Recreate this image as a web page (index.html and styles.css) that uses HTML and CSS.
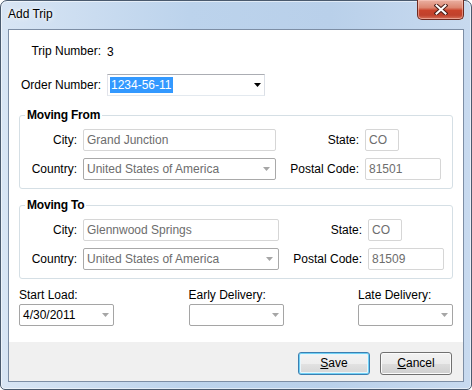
FILE: index.html
```html
<!DOCTYPE html>
<html lang="en">
<head>
    <meta charset="UTF-8">
    <title>Add Trip</title>
    <link rel="stylesheet" href="styles.css">
</head>
<body>
    <div class="window">
        <div class="titlebar">
            <span class="title">Add Trip</span>
            <button class="close" type="button">
                <svg width="14" height="11" viewBox="0 0 14 11">
                    <path d="M2.5 1.5 L11.5 9.5 M11.5 1.5 L2.5 9.5" stroke="#4a1e18" stroke-width="4" stroke-linecap="square"/>
                    <path d="M2.5 1.5 L11.5 9.5 M11.5 1.5 L2.5 9.5" stroke="#fff" stroke-width="2" stroke-linecap="square"/>
                </svg>
            </button>
        </div>
        <div class="client">
            <div class="content">
                <div class="head">
                    <span class="lbl">Trip Number:</span>
                    <span>3</span>
                    <span class="lbl">Order Number:</span>
                    <div class="combo order">
                        <span class="sel">1234-56-11</span>
                        <svg class="arrow" width="7" height="4"><polygon points="0,0 7,0 3.5,4" fill="#000"/></svg>
                    </div>
                </div>

                <fieldset class="group from">
                    <legend>Moving From</legend>
                    <div class="addr">
                        <span class="lbl">City:</span>
                        <div class="box">Grand Junction</div>
                        <span class="lbl">State:</span>
                        <div class="box state">CO</div>
                        <span class="lbl">Country:</span>
                        <div class="combo off">
                            <span>United States of America</span>
                            <svg class="arrow" width="7" height="4"><polygon points="0,0 7,0 3.5,4" fill="#a6a6a6"/></svg>
                        </div>
                        <span class="lbl">Postal Code:</span>
                        <div class="box postal">81501</div>
                    </div>
                </fieldset>

                <fieldset class="group to">
                    <legend>Moving To</legend>
                    <div class="addr">
                        <span class="lbl">City:</span>
                        <div class="box">Glennwood Springs</div>
                        <span class="lbl">State:</span>
                        <div class="box state">CO</div>
                        <span class="lbl">Country:</span>
                        <div class="combo off">
                            <span>United States of America</span>
                            <svg class="arrow" width="7" height="4"><polygon points="0,0 7,0 3.5,4" fill="#a6a6a6"/></svg>
                        </div>
                        <span class="lbl">Postal Code:</span>
                        <div class="box postal">81509</div>
                    </div>
                </fieldset>

                <div class="dates">
                    <div class="date">
                        <span>Start Load:</span>
                        <div class="combo pick">
                            <span>4/30/2011</span>
                            <svg class="arrow" width="7" height="4"><polygon points="0,0 7,0 3.5,4" fill="#a6a6a6"/></svg>
                        </div>
                    </div>
                    <div class="date">
                        <span>Early Delivery:</span>
                        <div class="combo pick">
                            <span></span>
                            <svg class="arrow" width="7" height="4"><polygon points="0,0 7,0 3.5,4" fill="#a6a6a6"/></svg>
                        </div>
                    </div>
                    <div class="date">
                        <span>Late Delivery:</span>
                        <div class="combo pick">
                            <span></span>
                            <svg class="arrow" width="7" height="4"><polygon points="0,0 7,0 3.5,4" fill="#a6a6a6"/></svg>
                        </div>
                    </div>
                </div>
            </div>
            <div class="footer">
                <button class="btn default" type="button"><u>S</u>ave</button>
                <button class="btn" type="button"><u>C</u>ancel</button>
            </div>
        </div>
    </div>
</body>
</html>
```

FILE: styles.css
```css
body {
    margin: 0;
    font-family: "Liberation Sans", Arial, sans-serif;
    font-size: 12px;
    color: #000;
}
.window {
    width: 472px;
    height: 390px;
    box-sizing: border-box;
    border: 1px solid #4a5a6e;
    border-radius: 7px 7px 5px 5px;
    background: linear-gradient(to right, #d8e5f4, #bcd3ec 40%, #b9d0ea 70%, #c8daef);
    box-shadow: inset 0 0 0 1px rgba(255, 255, 255, 0.55);
    padding: 0 7px 7px;
    display: flex;
    flex-direction: column;
}
.titlebar {
    height: 28px;
    flex: none;
    display: flex;
    align-items: flex-start;
}
.title {
    padding-top: 6px;
    line-height: 15px;
    text-shadow: 0 0 6px #fff, 0 0 3px #fff;
}
.close {
    margin: -1px 0 0 auto;
    width: 47px;
    height: 20px;
    padding: 0;
    border: 1px solid #6e2a20;
    border-top: none;
    border-radius: 0 0 5px 5px;
    background: linear-gradient(#eab0a2 0%, #dc8670 40%, #c9432b 55%, #c0412c 80%, #d6725a 100%);
    box-shadow: inset 0 0 0 1px rgba(255, 210, 200, 0.5);
    display: flex;
    align-items: center;
    justify-content: center;
}
.client {
    flex: 1;
    border: 1px solid #7d8ea5;
    background: #fff;
    display: flex;
    flex-direction: column;
}
.content {
    flex: 1;
    padding: 14px 10px 0;
}
.lbl {
    text-align: right;
    line-height: 15px;
}
.head {
    display: grid;
    grid-template-columns: 82px auto;
    column-gap: 6px;
    row-gap: 15px;
    align-items: center;
    justify-items: start;
}
.head .lbl {
    justify-self: end;
}
.combo, .box {
    height: 22px;
    box-sizing: border-box;
    display: flex;
    align-items: center;
    white-space: nowrap;
}
.combo {
    justify-content: space-between;
}
.order {
    width: 158px;
    border: 1px solid;
    border-color: #abadb3 #dbdfe6 #e3e9ef #e2e3ea;
    padding: 0 3px 0 2px;
}
.sel {
    background: #3399ff;
    color: #fff;
    line-height: 16px;
    padding: 0 1px;
}
.group {
    margin: 12px 0 0;
    padding: 6px 0 8px;
    border: 1px solid #d5dfe5;
    border-radius: 3px;
}
.group.to {
    margin-top: 9px;
}
.group legend {
    margin-left: 5px;
    padding: 0 2px;
    font-weight: bold;
    line-height: 15px;
    letter-spacing: -0.2px;
}
.addr {
    display: grid;
    grid-template-columns: 57px 193px 77px auto;
    column-gap: 6px;
    row-gap: 7px;
    align-items: center;
}
.to .addr {
    grid-template-columns: 57px 196px 77px auto;
}
.box {
    border: 1px solid #d6d6d6;
    border-radius: 2px;
    padding: 0 3px;
    color: #6d6d6d;
}
.state {
    width: 34px;
}
.postal {
    width: 76px;
}
.off {
    border: 1px solid #a9a9a9;
    border-radius: 2px;
    padding: 0 5px 0 3px;
    color: #6d6d6d;
}
.dates {
    margin-top: 9px;
    display: flex;
    justify-content: space-between;
}
.date {
    display: flex;
    flex-direction: column;
    gap: 1px;
    line-height: 15px;
}
.pick {
    width: 95px;
    border: 1px solid #a5a5a5;
    border-radius: 2px;
    padding: 0 4px 0 3px;
}
.footer {
    height: 39px;
    flex: none;
    box-sizing: border-box;
    background: #f0f0f0;
    padding: 3px 11px 0 0;
    display: flex;
    align-items: center;
    justify-content: flex-end;
    gap: 10px;
}
.btn {
    width: 72px;
    height: 23px;
    padding: 0;
    font-family: inherit;
    font-size: 12px;
    color: #000;
    border: 1px solid #707070;
    border-radius: 3px;
    background: linear-gradient(#f2f2f2 0%, #ebebeb 50%, #dddddd 51%, #cfcfcf 100%);
    box-shadow: inset 0 0 0 1px #fbfbfb;
}
.btn.default {
    border-color: #3c7fb1;
    background: linear-gradient(#f4f4f4 0%, #eeeeee 50%, #e2e2e2 51%, #d6d6d6 100%);
    box-shadow: inset 0 0 0 1px #6fd0f5, inset 0 0 0 2px #e8f6fc;
}
```
